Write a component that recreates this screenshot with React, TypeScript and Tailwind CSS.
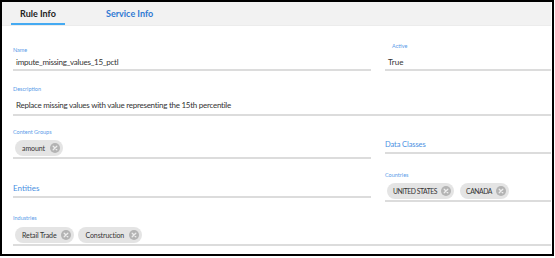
import React from "react";

const font = { fontFamily: "Lato, 'Noto Sans', sans-serif" };

function XIcon() {
  return (
    <svg width="10" height="10" viewBox="0 0 10 10" className="shrink-0">
      <circle cx="5" cy="5" r="5" fill="#b3b3b3" />
      <path d="M3.2 3.2 L6.8 6.8 M6.8 3.2 L3.2 6.8" stroke="#ececec" strokeWidth="1.3" strokeLinecap="round" />
    </svg>
  );
}

function Chip({ label, caps }: { label: string; caps?: boolean }) {
  return (
    <div className={caps ? "flex h-[16px] items-center gap-[4px] rounded-full bg-[#e4e4e4] pl-[6px] pr-[3px]" : "flex h-[16px] items-center gap-[5px] rounded-full bg-[#e4e4e4] pl-[7px] pr-[3px]"}>
      <span className={caps ? "text-[6.8px] leading-none text-[#333] tracking-[-0.45px]" : "text-[7px] leading-none text-[#333] tracking-[-0.1px]"}>{label}</span>
      <XIcon />
    </div>
  );
}

export default function App() {
  return (
    <div className="w-[555px] h-[258px] bg-white" style={font}>
      <div className="w-[554px] h-[256px] border-2 border-black flex flex-col">
        <div className="h-[24px] bg-[#f2f2f2] mr-[1px] flex items-stretch border-b border-[#ececec]">
          <div className="ml-[9px] w-[54px] flex flex-col">
            <div className="flex-1 flex items-center justify-center text-[9px] font-bold text-[#222] pt-[2px]">Rule Info</div>
            <div className="h-[2px] bg-[#45aaf2]" />
          </div>
          <div className="ml-[41px] flex items-center text-[9px] font-bold text-[#2f7ad3]">Service Info</div>
        </div>

        <div className="pl-[11px] pr-[1px] flex flex-col">
          {/* Row 1 */}
          <div className="flex gap-[14px]">
            <div className="w-[358px] border-b-2 border-[#dcdcdc]">
              <div className="mt-[20px] h-[8px] text-[5.5px] leading-[8px] text-[#5a9be8]">Name</div>
              <div className="mt-[2px] h-[12px] pl-[3px] text-[8px] leading-[12px] text-[#333] tracking-[-0.25px]">impute_missing_values_15_pctl</div>
              <div className="h-[1px]" />
            </div>
            <div className="flex-1 border-b-2 border-[#dcdcdc]">
              <div className="mt-[16px] h-[8px] pl-[7px] text-[5.5px] leading-[8px] text-[#5a9be8]">Active</div>
              <div className="mt-[6px] h-[12px] pl-[3px] text-[8px] leading-[12px] text-[#333]">True</div>
              <div className="h-[1px]" />
            </div>
          </div>

          {/* Row 2 */}
          <div className="border-b-2 border-[#dcdcdc]">
            <div className="mt-[14px] h-[8px] text-[5.5px] leading-[8px] text-[#5a9be8]">Description</div>
            <div className="mt-[6px] h-[12px] pl-[3px] text-[8px] leading-[12px] text-[#333] tracking-[-0.26px]">
              Replace missing values with value representing the 15th percentile
            </div>
            <div className="h-[3px]" />
          </div>

          {/* Row 3 */}
          <div className="flex gap-[14px] items-start">
            <div className="w-[358px] flex flex-col">
              <div className="border-b-2 border-[#dcdcdc]">
                <div className="mt-[12px] h-[8px] text-[5.5px] leading-[8px] text-[#5a9be8]">Content Groups</div>
                <div className="mt-[4px] pl-[2px] flex">
                  <Chip label="amount" />
                </div>
                <div className="h-[1px]" />
              </div>
              <div className="border-b-2 border-[#dcdcdc]">
                <div className="mt-[23px] h-[12px] text-[8px] leading-[12px] text-[#4a90e2]">Entities</div>
                <div className="h-[2px]" />
              </div>
            </div>
            <div className="flex-1 flex flex-col">
              <div className="border-b-2 border-[#dcdcdc]">
                <div className="mt-[23px] h-[12px] text-[7.5px] leading-[12px] text-[#4a90e2] tracking-[-0.1px]">Data Classes</div>
                <div className="h-[1px]" />
              </div>
              <div className="border-b-2 border-[#dcdcdc]">
                <div className="mt-[17px] h-[8px] text-[5.5px] leading-[8px] text-[#5a9be8]">Countries</div>
                <div className="mt-[4px] pl-[2px] flex gap-[6px]">
                  <Chip label="UNITED STATES" caps />
                  <Chip label="CANADA" caps />
                </div>
                <div className="h-[1px]" />
              </div>
            </div>
          </div>

          {/* Row 4 */}
          <div className="border-b-2 border-[#dcdcdc]">
            <div className="mt-[12px] h-[8px] text-[5.5px] leading-[8px] text-[#5a9be8]">Industries</div>
            <div className="mt-[5px] pl-[2px] flex gap-[4px]">
              <Chip label="Retail Trade" />
              <Chip label="Construction" />
            </div>
            <div className="h-[1px]" />
          </div>
        </div>
      </div>
    </div>
  );
}
